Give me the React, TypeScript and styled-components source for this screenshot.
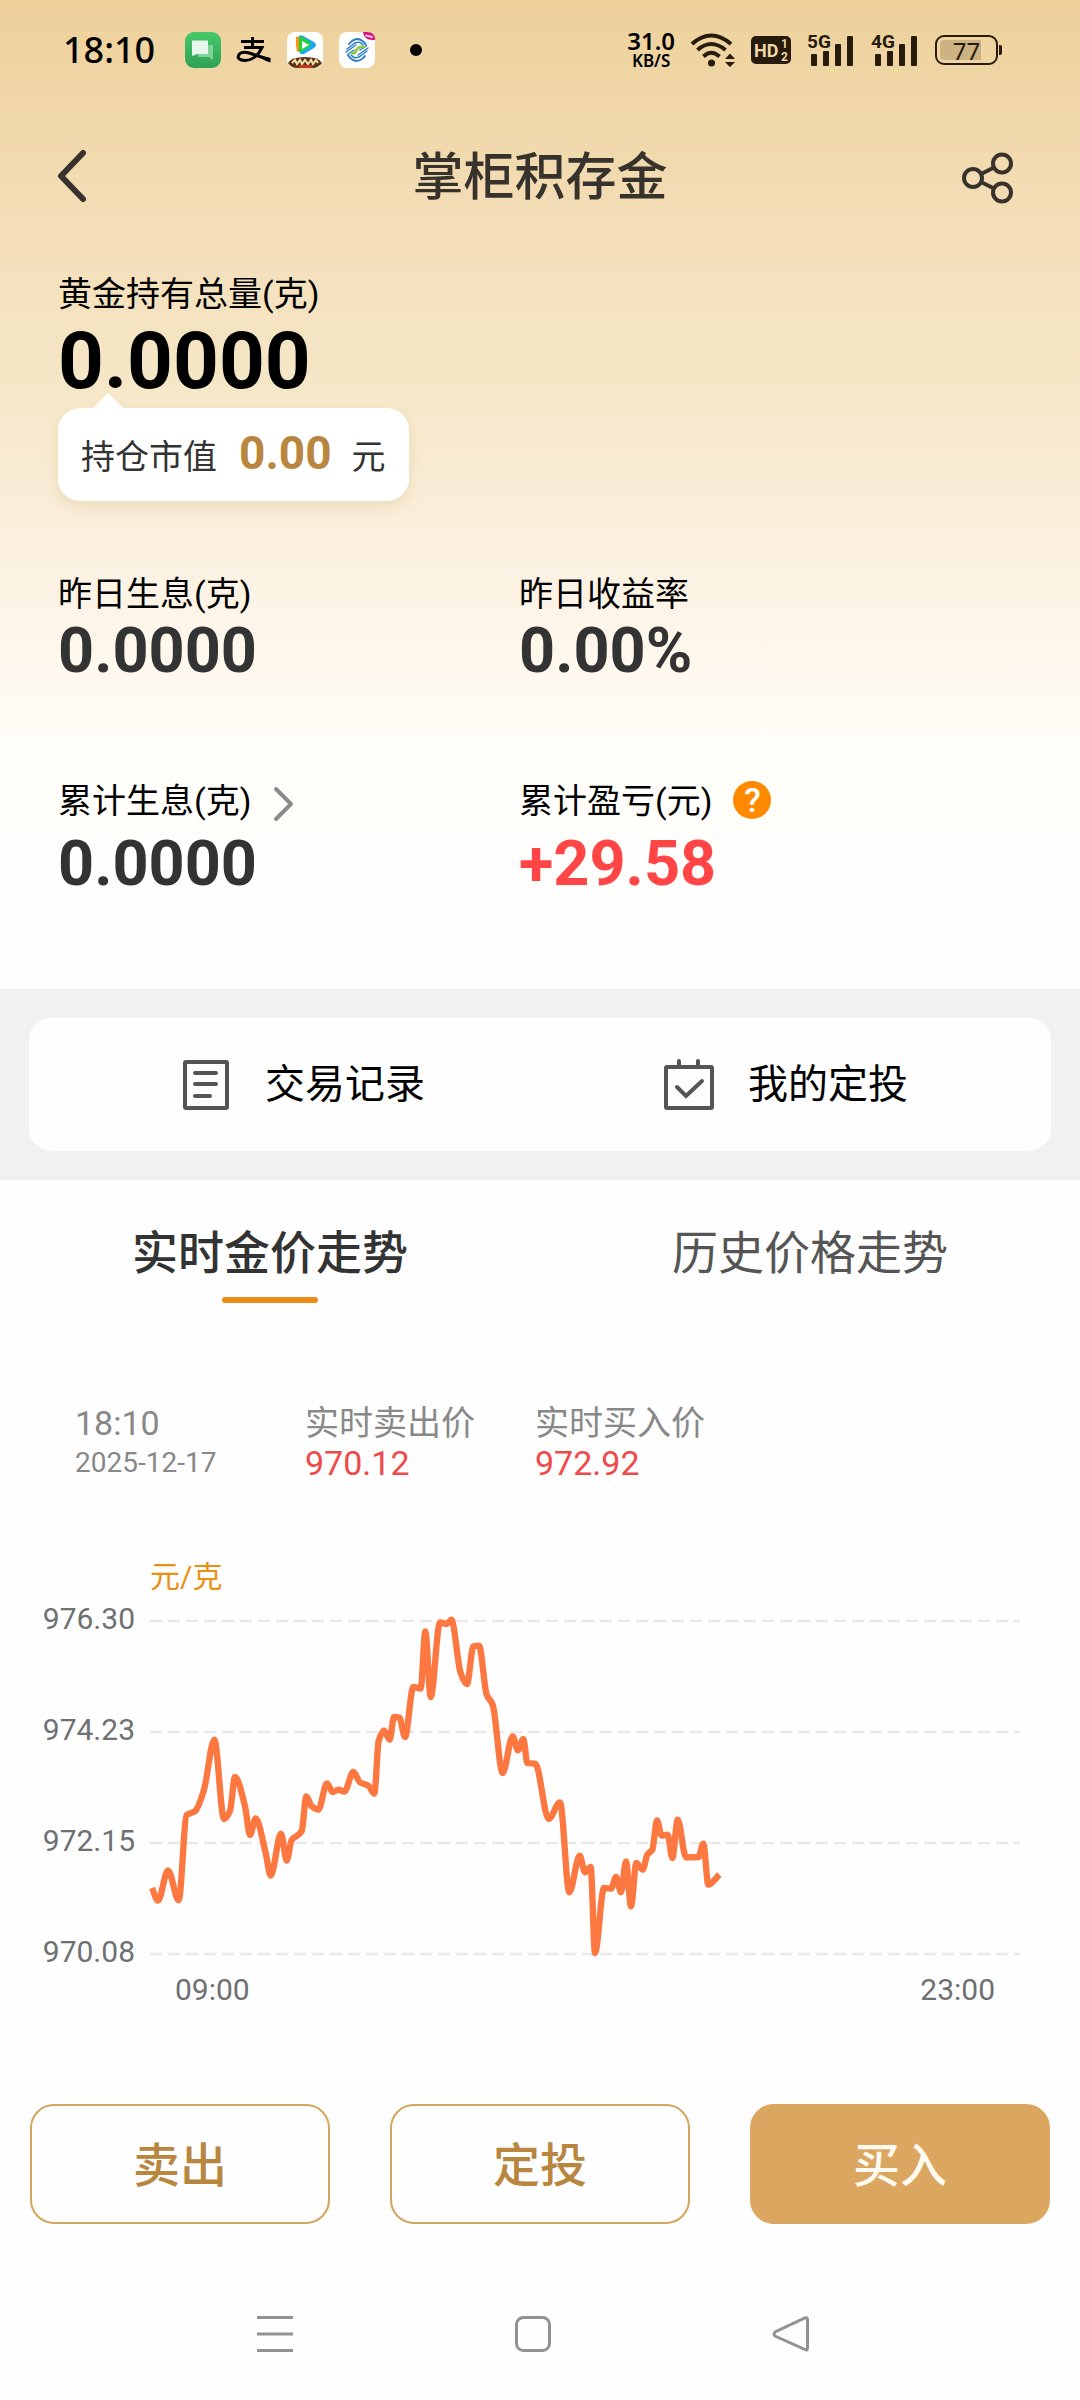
import React, { useState } from "react";
import styled, { createGlobalStyle } from "styled-components";

const GlobalStyle = createGlobalStyle`
  * { box-sizing: border-box; }
  body {
    margin: 0;
    background: #fefefe;
    color: #000;
    font-family: Roboto, "Noto Sans CJK SC", sans-serif;
  }
  button {
    margin: 0;
    padding: 0;
    border: 0;
    background: none;
    color: inherit;
    font: inherit;
    cursor: pointer;
  }
  svg { display: block; overflow: visible; }
  h1, p, dl, dt, dd { margin: 0; font-weight: 400; }
`;

const Page = styled.div`
  display: flex;
  flex-direction: column;
  min-height: 100vh;
`;

const Hero = styled.section`
  padding-bottom: 90px;
  background: linear-gradient(
    180deg,
    #eed19b 0%,
    #f4dfba 25%,
    #f5e6c6 38%,
    #fbf0df 55%,
    #fffaf1 70%,
    #fffefa 76%,
    #fefefe 100%
  );
`;

/* ---------- status bar ---------- */

const StatusBar = styled.div`
  display: flex;
  align-items: center;
  justify-content: space-between;
  height: 100px;
  padding: 0 82px 0 63px;
`;

const StatusGroup = styled.div`
  display: flex;
  align-items: center;
  gap: 16px;
`;

const Clock = styled.span`
  margin-right: 14px;
  font-family: "Noto Sans", sans-serif;
  font-size: 36px;
  font-weight: 500;
  line-height: 44px;
`;

const Speed = styled.div`
  display: flex;
  flex-direction: column;
  align-items: center;
  font-family: "Noto Sans", sans-serif;
  font-weight: 600;
`;

const SpeedValue = styled.span`
  font-size: 24px;
  line-height: 22px;
`;

const SpeedUnit = styled.span`
  font-size: 17px;
  line-height: 18px;
`;

const MoreDot = styled.span`
  width: 12px;
  height: 12px;
  margin-left: 19px;
  border-radius: 50%;
  background: #000;
`;

const Battery = styled.div`
  position: relative;
  width: 63px;
  height: 30px;
  padding: 3px;
  border: 2px solid #261b0c;
  border-radius: 9px;

  &::after {
    content: "";
    position: absolute;
    top: 8px;
    right: -6px;
    width: 3px;
    height: 10px;
    border-radius: 0 2px 2px 0;
    background: #261b0c;
  }
`;

const BatteryFill = styled.div`
  width: 77%;
  height: 100%;
  border-radius: 4px 0 0 4px;
  background: #cdb384;
`;

const BatteryText = styled.span`
  position: absolute;
  inset: 0;
  font-family: "Noto Sans", sans-serif;
  font-size: 24px;
  line-height: 27px;
  text-align: center;
  color: #261b0c;
`;

/* ---------- title bar ---------- */

const TitleBar = styled.header`
  display: grid;
  grid-template-columns: 1fr auto 1fr;
  align-items: center;
  height: 152px;
  padding: 0 56px;
`;

const IconButton = styled.button<{ $end?: boolean }>`
  justify-self: ${(p) => (p.$end ? "end" : "start")};
`;

const Title = styled.h1`
  padding-top: 3px;
  font-size: 51px;
  font-weight: 500;
  line-height: 60px;
  color: #37322b;
`;

/* ---------- holdings ---------- */

const Holdings = styled.div`
  padding: 22px 58px 0;
`;

const Label = styled.p`
  font-size: 34px;
  line-height: 40px;
`;

const Total = styled.p`
  margin-top: 2px;
  font-size: 80px;
  font-weight: 700;
  line-height: 90px;
`;

const Bubble = styled.div`
  position: relative;
  display: flex;
  align-items: baseline;
  gap: 20px;
  width: fit-content;
  height: 93px;
  margin-top: 2px;
  padding: 25px 23px 0;
  border-radius: 22px;
  background: #fff;
  box-shadow: 0 6px 14px rgba(190, 140, 50, 0.18);
  font-size: 34px;
  line-height: 40px;
  color: #333;

  &::before {
    content: "";
    position: absolute;
    top: -15px;
    left: 35px;
    border: solid transparent;
    border-width: 0 15px 15px;
    border-bottom-color: #fff;
  }
`;

const MarketValue = styled.strong`
  padding-left: 2px;
  font-size: 46px;
  font-weight: 700;
  color: #b8863f;
`;

const Stats = styled.dl`
  display: grid;
  grid-template-columns: 461px 1fr;
  row-gap: 95px;
  margin-top: 73px;
`;

const StatLabel = styled.dt<{ $tall?: boolean }>`
  display: flex;
  align-items: flex-start;
  gap: 21px;
  height: ${(p) => (p.$tall ? 46 : 40)}px;
  font-size: 34px;
  line-height: 40px;
`;

const StatValue = styled.dd<{ $up?: boolean }>`
  padding-top: 2px;
  font-size: 63px;
  font-weight: 700;
  line-height: 70px;
  color: ${(p) => (p.$up ? "#ff4545" : "#333")};
`;

const MoreButton = styled.button`
  padding: 6px 2px 0;
`;

const HelpButton = styled.button`
  width: 38px;
  height: 38px;
  border-radius: 50%;
  background: #ff8a00;
  color: #fff;
  font-size: 34px;
  font-weight: 500;
  line-height: 38px;
`;

/* ---------- shortcuts ---------- */

const Band = styled.section`
  padding: 29px;
  background: #f1f1f1;
`;

const Card = styled.nav`
  display: flex;
  justify-content: center;
  gap: 238px;
  height: 133px;
  padding-left: 8px;
  border-radius: 22px;
  background: #fefefe;
`;

const Shortcut = styled.a`
  display: flex;
  align-items: center;
  gap: 33px;
  color: #000;
  font-size: 40px;
  line-height: 48px;
  text-decoration: none;
`;

/* ---------- trend ---------- */

const Tabs = styled.div`
  display: grid;
  grid-template-columns: 1fr 1fr;
`;

const Tab = styled.button<{ $active: boolean }>`
  display: flex;
  flex-direction: column;
  align-items: center;
  gap: 16px;
  padding-top: 45px;
  font-size: 46px;
  line-height: 56px;
  font-weight: ${(p) => (p.$active ? 500 : 400)};
  color: ${(p) => (p.$active ? "#333" : "#555")};

  &::after {
    content: "";
    width: 96px;
    height: 6px;
    border-radius: 3px;
    background: ${(p) => (p.$active ? "#ef8c17" : "transparent")};
  }
`;

const Quote = styled.div`
  display: grid;
  grid-template-columns: 230px 230px 1fr;
  margin-top: 100px;
  padding: 0 75px;
`;

const QuoteText = styled.p<{ $up?: boolean; $small?: boolean }>`
  font-size: ${(p) => (p.$small ? 28 : 34)}px;
  line-height: 40px;
  color: ${(p) => (p.$up ? "#ee4a4a" : "#888")};
`;

const Chart = styled.figure`
  margin: 74px 60px 0 0;
`;

const Unit = styled.figcaption`
  padding-left: 150px;
  font-size: 30px;
  line-height: 40px;
  color: #ec9013;
`;

const PlotRow = styled.div`
  display: grid;
  grid-template-columns: 135px 1fr;
  column-gap: 15px;
  margin-top: 4px;
`;

const Axis = styled.div<{ $vertical?: boolean }>`
  display: flex;
  flex-direction: ${(p) => (p.$vertical ? "column" : "row")};
  justify-content: space-between;
  padding: ${(p) => (p.$vertical ? "0" : "2px 25px 0 175px")};
  font-size: 30px;
  line-height: 36px;
  text-align: right;
  color: #6e7072;
`;

const Plot = styled.svg`
  width: 100%;
  height: 333px;
  margin: 20px 0 16px;
`;

/* ---------- bottom ---------- */

const Actions = styled.div`
  display: grid;
  grid-template-columns: repeat(3, 1fr);
  gap: 60px;
  margin-top: 96px;
  padding: 0 30px;
`;

const Action = styled.button<{ $primary?: boolean }>`
  height: 120px;
  padding-bottom: 6px;
  border: 2px solid ${(p) => (p.$primary ? "#dba660" : "#d3a55f")};
  border-radius: 24px;
  background: ${(p) => (p.$primary ? "#dba660" : "#fefefe")};
  color: ${(p) => (p.$primary ? "#fffaf0" : "#b8863f")};
  font-size: 47px;
  font-weight: 500;
`;

const SystemNav = styled.nav`
  display: flex;
  align-items: center;
  justify-content: center;
  gap: 222px;
  height: 132px;
  margin-top: 44px;
  padding-right: 14px;
`;

/* ---------- drawings ---------- */

const INK = "#261b0c";

const MessageIcon = () => (
  <svg width="36" height="36" viewBox="0 0 36 36">
    <defs>
      <linearGradient id="msg" x1="0" y1="0" x2="0" y2="1">
        <stop offset="0" stopColor="#46c96a" />
        <stop offset="1" stopColor="#2fa153" />
      </linearGradient>
    </defs>
    <rect width="36" height="36" rx="9" fill="url(#msg)" />
    <path d="M13 13H28V28L24 25H13Z" fill="#7fd296" />
    <path d="M7 8.500H23V22H12L7 24Z" fill="#e9f6ec" />
  </svg>
);

const AlipayIcon = () => (
  <svg width="34" height="26" viewBox="0 0 34 26" fill="none" stroke="#000" strokeWidth="3">
    <path d="M4 4.500H27M15.500 0V10M7 10.500H25C22 17 16 23.500 8 23.500C2 23.500 .5 21 1.500 18.500C3 14.800 8 14.800 12 16C19 18 26 21 33 22.500" />
    <path d="M20 18.500L33.500 21V25.500L29 24Z" fill="#000" stroke="none" />
  </svg>
);

const VideoIcon = () => (
  <svg width="36" height="36" viewBox="0 0 36 36">
    <rect width="36" height="36" rx="8" fill="#fff" />
    <path d="M9 5Q8 12 10 20L14 19V4Z" fill="#ff9212" />
    <path d="M12 4Q14 2 18 5L27 10Q31 13 27 16L17 22Q13 23 12 19Z" fill="#19a7f5" />
    <path d="M12 5Q14 4 17 6L23 10Q25 13 22 15L15 20Q12 20 12 17Z" fill="#20d03c" />
    <path d="M15 9L22 13L15 17Z" fill="#fff" />
    <path d="M1 31Q4 25 18 25Q32 25 35 31Q31 36 26 36H10Q4 36 1 31Z" fill="#5e3413" />
    <path d="M5 31L8 28L10 32L13 28L15 32L18 28L21 32L24 28L26 32L29 28L31 31" fill="none" stroke="#f2dfb0" strokeWidth="2" />
    <path d="M12 34.500H25" stroke="#d6341c" strokeWidth="2.500" />
  </svg>
);

const MobileIcon = () => (
  <svg width="36" height="36" viewBox="0 0 36 36" fill="none" strokeWidth="1.500" strokeLinecap="round">
    <rect width="36" height="36" rx="8" fill="#fff" />
    <path d="M24 0H28Q36 0 36 8Q25 9 24 0Z" fill="#d5127f" />
    <path d="M27 3.500L33 5" stroke="#f6c3e0" strokeWidth="2" />
    <g stroke="#2f7fc4">
      <path d="M10 12Q14 7 19 7Q24 8 27 13" strokeWidth="2" />
      <path d="M8 17L16 11Q21 9 24 13" />
      <path d="M7 20L17 13" />
      <path d="M9 22L15 18" />
      <path d="M26 24Q22 29 17 29Q12 28 9 23" strokeWidth="2" />
      <path d="M28 19L20 25Q15 27 12 23" />
      <path d="M29 16L19 23" />
      <path d="M27 14L21 18" />
    </g>
    <path d="M13 21Q16 22 17 19T21 15L25 15" stroke="#8cc63f" strokeWidth="2.500" />
  </svg>
);

const WifiIcon = () => (
  <svg width="44" height="34" viewBox="0 0 44 34" fill="none" stroke={INK} strokeWidth="4">
    <path d="M1 11Q20 -6 40 11" />
    <path d="M6.500 17Q20 5 34.500 17" />
    <path d="M12.500 23.500Q20 16 28.500 23.500" />
    <circle cx="20.500" cy="30" r="3.500" fill={INK} stroke="none" />
    <path d="M34 26L39 20.500L44 26ZM34 29L39 34L44 29Z" fill={INK} stroke="none" />
  </svg>
);

const HdIcon = () => (
  <svg width="40" height="28" viewBox="0 0 40 28" fontFamily="Roboto, sans-serif" fontWeight="700" fill="#efd6a5">
    <rect width="40" height="28" rx="5" fill={INK} />
    <text x="3" y="21" fontSize="18">HD</text>
    <text x="30" y="12" fontSize="12">1</text>
    <text x="30" y="25" fontSize="12">2</text>
  </svg>
);

const SignalIcon = ({ name }: { name: string }) => (
  <svg width="48" height="32" viewBox="0 0 48 32" fill={INK}>
    <text x="0" y="14" fontFamily="Roboto, sans-serif" fontWeight="700" fontSize="19">
      {name}
    </text>
    <rect x="4" y="20" width="6" height="12" rx="1" />
    <rect x="16" y="17" width="6" height="15" rx="1" />
    <rect x="28" y="10" width="6" height="22" rx="1" />
    <rect x="40" y="2" width="6" height="30" rx="1" />
  </svg>
);

const BackIcon = () => (
  <svg width="32" height="52" viewBox="0 0 32 52" fill="none" stroke="#37322b" strokeWidth="6" strokeLinecap="round" strokeLinejoin="round">
    <path d="M27 3L5 26L27 49" />
  </svg>
);

const ShareIcon = () => (
  <svg width="62" height="56" viewBox="0 0 62 56" fill="none" stroke="#37322b" strokeWidth="4">
    <circle cx="11" cy="30" r="9" />
    <circle cx="40" cy="15.500" r="9" />
    <circle cx="40" cy="44.500" r="9" />
    <path d="M19 26L32 19.500M19 34L32 40.500" />
  </svg>
);

const ChevronIcon = () => (
  <svg width="20" height="34" viewBox="0 0 20 34" fill="none" stroke="#8a8a8a" strokeWidth="4" strokeLinecap="round" strokeLinejoin="round">
    <path d="M2 2L17 17L2 32" />
  </svg>
);

const RecordIcon = () => (
  <svg width="52" height="52" viewBox="0 0 52 52" fill="none" stroke="#555" strokeWidth="4">
    <rect x="5" y="3" width="42" height="46" rx="1" />
    <path d="M15 14H36M15 25H36M15 37H30" strokeLinecap="round" />
  </svg>
);

const PlanIcon = () => (
  <svg width="52" height="52" viewBox="0 0 52 52" fill="none" stroke="#555" strokeWidth="4">
    <rect x="3" y="8" width="46" height="41" rx="1" />
    <path d="M16 2V8M35 2V8M14 28L23 37L39 22" strokeLinecap="round" />
  </svg>
);

const NAV_ICONS = [
  { name: "最近任务", shape: <path d="M0 1.500H36M0 18H36M0 34.500H36" /> },
  { name: "主屏幕", shape: <rect x="1.500" y="1.500" width="33" height="33" rx="7" /> },
  { name: "返回", shape: <path d="M32 2Q34.500 1 34.500 4V32Q34.500 35 32 33.500L2 20Q0 18 2 16Z" /> },
];

/* Price line, in thirds of a pixel from the plot's top left corner. */
const PRICES: [number, number][] = [
  [6, 801], [24, 839], [54, 748], [86, 838], [110, 582], [135, 571], [162, 506],
  [193, 356], [222, 594], [240, 570], [255, 468], [285, 556], [300, 642], [317, 592],
  [347, 696], [362, 764], [393, 638], [410, 719], [425, 657], [455, 631], [469, 526],
  [485, 556], [505, 566], [531, 487], [548, 513], [565, 506], [583, 512], [610, 453],
  [630, 484], [655, 494], [673, 518], [686, 360], [702, 328], [719, 356], [732, 288],
  [748, 290], [765, 348], [790, 198], [812, 203], [826, 31], [842, 228], [870, 4],
  [890, 9], [904, -4], [932, 156], [951, 189], [970, 76], [987, 74], [1010, 221],
  [1028, 251], [1058, 456], [1088, 346], [1104, 388], [1120, 354], [1132, 426],
  [1156, 428], [1196, 594], [1230, 544], [1258, 814], [1289, 704], [1305, 754],
  [1322, 738], [1335, 996], [1362, 801], [1383, 803], [1398, 768], [1413, 814],
  [1428, 721], [1443, 856], [1459, 726], [1478, 746], [1492, 701], [1507, 686],
  [1521, 598], [1535, 644], [1553, 641], [1567, 711], [1583, 596], [1608, 709],
  [1645, 708], [1660, 668], [1675, 791], [1708, 761],
];

/* Monotone cubic curve: never overshoots a high or a low. */
function smoothPath(points: [number, number][]): string {
  const n = points.length;
  const slope = (i: number) =>
    (points[i + 1][1] - points[i][1]) / (points[i + 1][0] - points[i][0]);
  const tangent = points.map((_, i) => {
    if (i === 0) return slope(0);
    if (i === n - 1) return slope(n - 2);
    const a = slope(i - 1);
    const b = slope(i);
    return a * b <= 0 ? 0 : (2 * a * b) / (a + b);
  });
  let d = `M${points[0][0]} ${points[0][1]}`;
  for (let i = 0; i < n - 1; i++) {
    const [x0, y0] = points[i];
    const [x1, y1] = points[i + 1];
    const h = (x1 - x0) / 3;
    d += `C${x0 + h} ${y0 + tangent[i] * h} ${x1 - h} ${y1 - tangent[i + 1] * h} ${x1} ${y1}`;
  }
  return d;
}

export default function App() {
  const [tab, setTab] = useState(0);

  return (
    <Page>
      <GlobalStyle />
      <Hero>
        <StatusBar>
          <StatusGroup>
            <Clock>18:10</Clock>
            <MessageIcon />
            <AlipayIcon />
            <VideoIcon />
            <MobileIcon />
            <MoreDot />
          </StatusGroup>
          <StatusGroup>
            <Speed>
              <SpeedValue>31.0</SpeedValue>
              <SpeedUnit>KB/S</SpeedUnit>
            </Speed>
            <WifiIcon />
            <HdIcon />
            <SignalIcon name="5G" />
            <SignalIcon name="4G" />
            <Battery>
              <BatteryFill />
              <BatteryText>77</BatteryText>
            </Battery>
          </StatusGroup>
        </StatusBar>

        <TitleBar>
          <IconButton aria-label="返回">
            <BackIcon />
          </IconButton>
          <Title>掌柜积存金</Title>
          <IconButton $end aria-label="分享">
            <ShareIcon />
          </IconButton>
        </TitleBar>

        <Holdings>
          <Label>黄金持有总量(克)</Label>
          <Total>0.0000</Total>
          <Bubble>
            <span>持仓市值</span>
            <MarketValue>0.00</MarketValue>
            <span>元</span>
          </Bubble>
          <Stats>
            <div>
              <StatLabel>昨日生息(克)</StatLabel>
              <StatValue>0.0000</StatValue>
            </div>
            <div>
              <StatLabel>昨日收益率</StatLabel>
              <StatValue>0.00%</StatValue>
            </div>
            <div>
              <StatLabel $tall>
                累计生息(克)
                <MoreButton aria-label="查看累计生息">
                  <ChevronIcon />
                </MoreButton>
              </StatLabel>
              <StatValue>0.0000</StatValue>
            </div>
            <div>
              <StatLabel $tall>
                累计盈亏(元)
                <HelpButton>?</HelpButton>
              </StatLabel>
              <StatValue $up>+29.58</StatValue>
            </div>
          </Stats>
        </Holdings>
      </Hero>

      <Band>
        <Card>
          <Shortcut href="#records">
            <RecordIcon />
            交易记录
          </Shortcut>
          <Shortcut href="#plans">
            <PlanIcon />
            我的定投
          </Shortcut>
        </Card>
      </Band>

      <Tabs role="tablist">
        {["实时金价走势", "历史价格走势"].map((name, i) => (
          <Tab key={name} role="tab" aria-selected={tab === i} $active={tab === i} onClick={() => setTab(i)}>
            {name}
          </Tab>
        ))}
      </Tabs>

      <Quote>
        <div>
          <QuoteText>18:10</QuoteText>
          <QuoteText $small>2025-12-17</QuoteText>
        </div>
        <div>
          <QuoteText>实时卖出价</QuoteText>
          <QuoteText $up>970.12</QuoteText>
        </div>
        <div>
          <QuoteText>实时买入价</QuoteText>
          <QuoteText $up>972.92</QuoteText>
        </div>
      </Quote>

      <Chart>
        <Unit>元/克</Unit>
        <PlotRow>
          <Axis $vertical>
            <span>976.30</span>
            <span>974.23</span>
            <span>972.15</span>
            <span>970.08</span>
          </Axis>
          <Plot viewBox="0 0 2610 999" preserveAspectRatio="none" fill="none">
            {[0, 333, 666, 999].map((y) => (
              <path key={y} d={`M0 ${y}H2610`} stroke="#e9e9e9" strokeWidth="8" strokeDasharray="36 18" />
            ))}
            <path d={smoothPath(PRICES)} stroke="#fd7740" strokeWidth="19" strokeLinejoin="round" />
          </Plot>
        </PlotRow>
        <Axis>
          <span>09:00</span>
          <span>23:00</span>
        </Axis>
      </Chart>

      <Actions>
        <Action>卖出</Action>
        <Action>定投</Action>
        <Action $primary>买入</Action>
      </Actions>

      <SystemNav>
        {NAV_ICONS.map((icon) => (
          <IconButton key={icon.name} aria-label={icon.name}>
            <svg width="36" height="36" viewBox="0 0 36 36" fill="none" stroke="#929292" strokeWidth="3">
              {icon.shape}
            </svg>
          </IconButton>
        ))}
      </SystemNav>
    </Page>
  );
}
